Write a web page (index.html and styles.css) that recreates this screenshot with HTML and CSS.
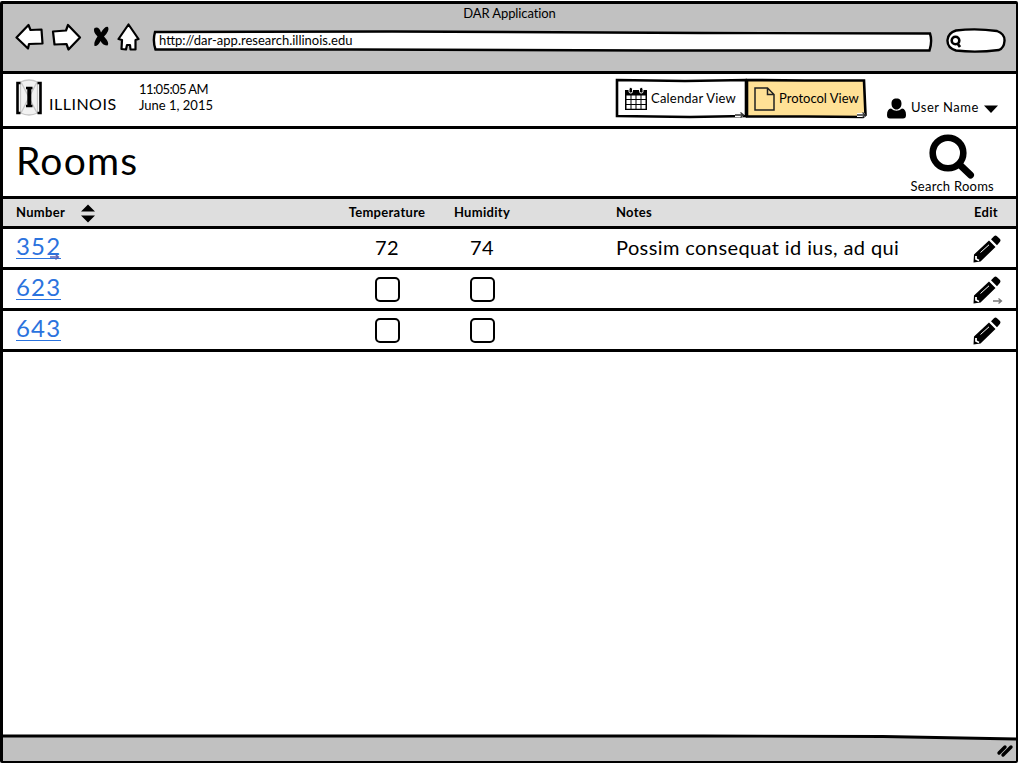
FILE: index.html
```
<!DOCTYPE html>
<html lang="en">

<head>
    <meta charset="UTF-8">
    <meta name="viewport" content="width=device-width, initial-scale=1.0">
    <title>DAR Application</title>
    <link rel="stylesheet" href="styles.css">
</head>

<body>
    <svg class="defs" width="0" height="0">
        <symbol id="pencil" viewBox="0 0 28 28">
            <path d="M0.500 27.500 L1 19.500 L16 5.500 L22.500 12 L7.500 26.500 Z M18 4.300 L21 1.200 Q22.500 0 24 1.200 L27 4 Q28 5.300 27 6.800 L24 10.200 Z" fill="#000" />
            <path d="M3 21 L3 24 L6 25.500" fill="none" stroke="#fff" stroke-width="1.800" />
            <path d="M7.500 17.500 L16 9.800" stroke="#fff" stroke-width="1" />
        </symbol>
        <symbol id="link-arrow" viewBox="0 0 10 8">
            <path d="M0 4 H8 M5.500 1.500 L8.500 4 L5.500 6.500" fill="none" stroke="currentColor" stroke-width="1.300" />
        </symbol>
    </svg>

    <div class="window">
        <div class="chrome">
            <div class="title">DAR Application</div>
            <div class="toolbar">
                <svg class="nav" width="126" height="30" viewBox="0 0 126 30">
                    <g fill="#fff" stroke="#000" stroke-width="2.200" stroke-linejoin="round">
                        <path d="M1.500 14.500 L13.500 2 L15.500 7 L26.500 6.500 L27.500 20.500 L14 21 L13 25.500 Z" />
                        <path d="M38 8.500 L51 7.500 L53 2 L65 14.500 L53.500 26.500 L51.500 21 L39.500 21.500 Z" />
                        <path d="M103.500 16 L113.500 1.500 L123.500 16 L120.500 17 L120.500 26.500 L115.500 26.500 L115 22 L112 22 L111 26.500 L106.500 26 L107 17 Z" />
                    </g>
                    <path d="M79.500 5 Q84 3 86 9.500 Q90 3 93 4 Q95 7.500 89 13.500 Q95 20 92.500 22.500 Q88 22.500 85.500 18 Q83 23.500 79.500 23 Q78.500 19 82.500 13.500 Q77.500 8.500 79.500 5 Z" />
                </svg>
                <div class="address">
                    <svg viewBox="0 0 781 22">
                        <path d="M3 2 L240 1.500 L550 3 L778 3.500 Q780.500 11 777.500 20.500 L500 20.500 L200 19.500 L3.500 19.500 Q0.500 11 3 2 Z" fill="#fff" stroke="#000" stroke-width="2.400" />
                    </svg>
                    <span>http://dar-app.research.illinois.edu</span>
                </div>
                <svg class="search" width="60" height="26" viewBox="0 0 60 26">
                    <path d="M10 2.500 Q30 0 51 3 Q59 6 58.500 13 Q58 20 53 22 Q30 25 10 22.500 Q1 20 1.500 12 Q2 5 10 2.500 Z" fill="#fff" stroke="#000" stroke-width="2.400" />
                    <circle cx="9.500" cy="12.500" r="3.800" fill="none" stroke="#000" stroke-width="2.600" />
                    <path d="M11.500 15.500 L14 19" stroke="#000" stroke-width="2.800" />
                </svg>
            </div>
        </div>

        <div class="header">
            <svg class="logo" width="26" height="38" viewBox="0 0 26 38">
                <path d="M4.500 3 Q13 -1 21.500 3 V34 Q13 38 4.500 34 Z M5 3 L21 34 M21 3 L5 34" fill="#f2f2f2" stroke="#c8c8c8" stroke-width="1.300" />
                <path d="M4.500 4 H1.500 V34 H4.500 M21.500 4 H24.500 V34 H21.500" fill="none" stroke="#000" stroke-width="2.600" />
                <path d="M10 9 H16.500 M10 27 H16.500" stroke="#000" stroke-width="2.400" />
                <path d="M13.300 8 V27" stroke="#000" stroke-width="4" />
            </svg>
            <span class="brand">ILLINOIS</span>
            <div class="clock">
                <div class="time">11:05:05 AM</div>
                <div class="date">June 1, 2015</div>
            </div>
            <div class="views">
                <div class="view calendar">
                    <svg class="outline" width="132" height="41" viewBox="0 0 132 41">
                        <path d="M2 2 L70 3 L131 2 L131 38 L75 39 L2 38 Z" fill="#fff" stroke="#000" stroke-width="2.600" />
                    </svg>
                    <div class="label">
                        <svg width="22" height="23" viewBox="0 0 22 23">
                            <path d="M0 3 H22 V23 H0 Z" />
                            <path d="M1.500 8.500h4v3.500h-4z M6.500 8.500h4v3.500h-4z M11.500 8.500h4v3.500h-4z M16.500 8.500h4v3.500h-4z M1.500 13h4v4h-4z M6.500 13h4v4h-4z M11.500 13h4v4h-4z M16.500 13h4v4h-4z M1.500 18h4v3.700h-4z M6.500 18h4v3.700h-4z M11.500 18h4v3.700h-4z M16.500 18h4v3.700h-4z" fill="#fff" />
                            <rect x="4" y="0.500" width="3.500" height="5.500" rx="1.500" stroke="#fff" />
                            <rect x="14.500" y="0.500" width="3.500" height="5.500" rx="1.500" stroke="#fff" />
                        </svg>
                        <span>Calendar View</span>
                    </div>
                    <svg class="hint" width="10" height="8"><rect y="2" width="8" height="4" fill="#fff" /><use href="#link-arrow" /></svg>
                </div>
                <div class="view protocol">
                    <svg class="outline" width="122" height="41" viewBox="0 0 122 41">
                        <path d="M2 2 L60 2.500 L119 2.500 L120.500 37 L118 39 L60 38.500 L2 38.500 Z" fill="#ffe196" stroke="#000" stroke-width="2.600" />
                    </svg>
                    <div class="label">
                        <svg width="21" height="24" viewBox="0 0 21 24">
                            <path d="M1 1 H13.500 L20 7.500 V23 H1 Z M13.500 1 V7.500 H20" fill="none" stroke="#222" stroke-width="1.500" />
                        </svg>
                        <span>Protocol View</span>
                    </div>
                    <svg class="hint" width="10" height="8"><rect y="2" width="8" height="4" fill="#fff" /><use href="#link-arrow" /></svg>
                </div>
            </div>
            <div class="user">
                <svg width="19" height="21" viewBox="0 0 19 21">
                    <path d="M9.500 0.500 C13 0.500 14.500 2.500 14.500 5.500 C14.500 9 12.500 11.500 9.500 11.500 C6.500 11.500 4.500 9 4.500 5.500 C4.500 2.500 6 0.500 9.500 0.500 Z M4 10.500 Q9.500 15 15 10.500 Q19 11 19 17 Q19 20.500 16 20.500 H3 Q0 20.500 0 17 Q0 11 4 10.500 Z" />
                </svg>
                <span>User Name</span>
                <svg width="14" height="8" viewBox="0 0 14 8"><path d="M0 0.500 H14 L7 8 Z" /></svg>
            </div>
        </div>

        <div class="heading">
            <h1>Rooms</h1>
            <div class="find">
                <svg width="46" height="46" viewBox="0 0 46 46">
                    <circle cx="19" cy="19" r="15.300" fill="none" stroke="#000" stroke-width="6.600" />
                    <path d="M31 31 L41.500 41" stroke="#000" stroke-width="7" stroke-linecap="round" />
                </svg>
                <span>Search Rooms</span>
            </div>
        </div>

        <table class="rooms">
            <thead>
                <tr>
                    <th class="number">
                        <div class="sort">
                            <span>Number</span>
                            <svg width="14" height="19" viewBox="0 0 14 19"><path d="M0 7.500 L7 0.500 L14 7.500 Z M0 11.500 H14 L7 18.500 Z" /></svg>
                        </div>
                    </th>
                    <th class="temp">Temperature</th>
                    <th class="humidity">Humidity</th>
                    <th class="notes">Notes</th>
                    <th class="edit">Edit</th>
                </tr>
            </thead>
            <tbody>
                <tr>
                    <td class="number"><a href="#">352</a><svg class="hint" width="10" height="8"><use href="#link-arrow" /></svg></td>
                    <td class="temp">72</td>
                    <td class="humidity">74</td>
                    <td class="notes">Possim consequat id ius, ad qui</td>
                    <td class="edit"><svg class="pencil" width="28" height="28"><use href="#pencil" /></svg></td>
                </tr>
                <tr>
                    <td class="number"><a href="#">623</a></td>
                    <td class="temp"><span class="box"></span></td>
                    <td class="humidity"><span class="box"></span></td>
                    <td class="notes"></td>
                    <td class="edit"><svg class="pencil" width="28" height="28"><use href="#pencil" /></svg><svg class="hint" width="10" height="8"><use href="#link-arrow" /></svg></td>
                </tr>
                <tr>
                    <td class="number"><a href="#">643</a></td>
                    <td class="temp"><span class="box"></span></td>
                    <td class="humidity"><span class="box"></span></td>
                    <td class="notes"></td>
                    <td class="edit"><svg class="pencil" width="28" height="28"><use href="#pencil" /></svg></td>
                </tr>
            </tbody>
        </table>

        <div class="content"></div>

        <div class="statusbar">
            <svg viewBox="0 0 1013 27">
                <path d="M0 2 L700 2 L880 2.500 L1013 5 V27 H0 Z" fill="#c1c1c1" />
                <path d="M0 2 L700 2 L880 2.500 L1013 5" fill="none" stroke="#000" stroke-width="2.800" />
                <path d="M996 19 L1002 13 M1000 21 L1008 13" stroke="#000" stroke-width="3.400" stroke-linecap="round" />
            </svg>
        </div>
    </div>
</body>

</html>
```
FILE: styles.css
```
* {
    box-sizing: border-box;
}

body {
    margin: 0;
    height: 764px;
    padding: 1px 1px 1px 0;
    background-color: white;
    color: black;
    font-family: Lato, "Noto Sans", sans-serif;
    font-size: 13px;
    overflow: hidden;
}

svg {
    display: block;
    flex: none;
}

.defs {
    position: absolute;
}

.window {
    display: flex;
    flex-direction: column;
    height: 762px;
    border: 3px solid black;
    border-right-width: 2px;
    border-radius: 2px;
}

/* browser bar */
.chrome {
    height: 70px;
    background-color: #c1c1c1;
    border-bottom: 3px solid black;
}

.title {
    height: 19px;
    line-height: 18px;
    text-align: center;
    letter-spacing: -0.1px;
}

.toolbar {
    display: flex;
    padding-left: 12px;
}

.address {
    display: grid;
    width: 781px;
    height: 22px;
    margin: 7px 0 0 11px;
}

.address svg,
.address span {
    grid-area: 1 / 1;
}

.address span {
    padding-left: 7px;
    line-height: 20px;
}

.search {
    margin: 5px 0 0 13px;
}

/* page header */
.header {
    display: flex;
    height: 55px;
    border-bottom: 3px solid black;
}

.logo {
    margin: 5px 0 0 13px;
}

.brand {
    width: 97px;
    padding: 20px 0 0 7px;
    font-size: 16px;
    line-height: 20px;
    letter-spacing: 0.5px;
}

.clock {
    width: 476px;
    padding-top: 7px;
    line-height: 16px;
}

.time {
    letter-spacing: -0.6px;
}

.views {
    display: flex;
    padding-top: 4px;
}

.view {
    position: relative;
    display: grid;
    height: 41px;
}

.calendar {
    width: 130px;
}

.protocol {
    width: 122px;
}

.outline,
.label {
    grid-area: 1 / 1;
}

.label {
    display: flex;
    align-items: center;
    gap: 4px;
    padding-left: 10px;
    letter-spacing: 0.2px;
    white-space: nowrap;
}

.protocol .label {
    padding-left: 9px;
    letter-spacing: 0;
}

.label span {
    margin-top: -2px;
}

.hint {
    position: absolute;
    color: #777;
}

.view .hint {
    right: 0;
    bottom: 0;
    color: #333;
}

.user {
    display: flex;
    align-items: center;
    height: 21px;
    margin: 24px 0 0 20px;
    gap: 5px;
    letter-spacing: 0.5px;
}

.user span {
    margin-top: -3px;
}

/* title row */
.heading {
    display: flex;
    justify-content: space-between;
    height: 70px;
    padding: 0 22px 0 13px;
    border-bottom: 3px solid black;
}

h1 {
    margin: 8px 0 0;
    font-size: 39px;
    font-weight: normal;
    line-height: 46px;
    letter-spacing: 1.2px;
}

.find {
    display: flex;
    flex-direction: column;
    align-items: center;
    padding-top: 5px;
    font-size: 13px;
    line-height: 12px;
    letter-spacing: 0.25px;
}

/* room list */
.rooms {
    width: 100%;
    table-layout: fixed;
    border-collapse: separate;
    border-spacing: 0;
}

.rooms th,
.rooms td {
    padding: 0;
    border-bottom: 3px solid black;
    text-align: center;
}

.rooms th {
    height: 30px;
    padding-bottom: 1px;
    background-color: #dedede;
    font-size: 13px;
    letter-spacing: 0.3px;
}

.rooms td {
    position: relative;
    height: 41px;
    font-size: 20px;
    letter-spacing: 0.4px;
}

.rooms td.temp,
.rooms td.humidity,
.rooms td.notes {
    padding-bottom: 2px;
}

.rooms .number {
    width: 337px;
    padding-left: 13px;
    text-align: left;
}

.sort {
    display: flex;
    align-items: center;
    gap: 16px;
}

.sort svg {
    margin-top: 2px;
}

.rooms .temp {
    width: 94px;
}

.rooms .humidity {
    width: 96px;
}

.rooms .notes {
    padding-left: 86px;
    text-align: left;
}

.rooms .edit {
    width: 60px;
}

.rooms td.number {
    padding-bottom: 6px;
}

a {
    display: inline-block;
    height: 25px;
    color: #2b73de;
    font-size: 24px;
    line-height: 23px;
    letter-spacing: 1.2px;
    text-decoration: none;
    border-bottom: 1px solid #2b73de;
    vertical-align: middle;
}

.number .hint {
    left: 47px;
    bottom: 6px;
    color: #5b62b5;
}

.box {
    display: block;
    width: 25px;
    height: 25px;
    margin: 2px auto 0;
    border: 2px solid black;
    border-radius: 5px;
}

.pencil {
    margin: 2px 15px 0 17px;
}

.edit .hint {
    right: 13px;
    bottom: 3px;
}

.content {
    flex: 1;
}

.statusbar {
    height: 26px;
}
```
